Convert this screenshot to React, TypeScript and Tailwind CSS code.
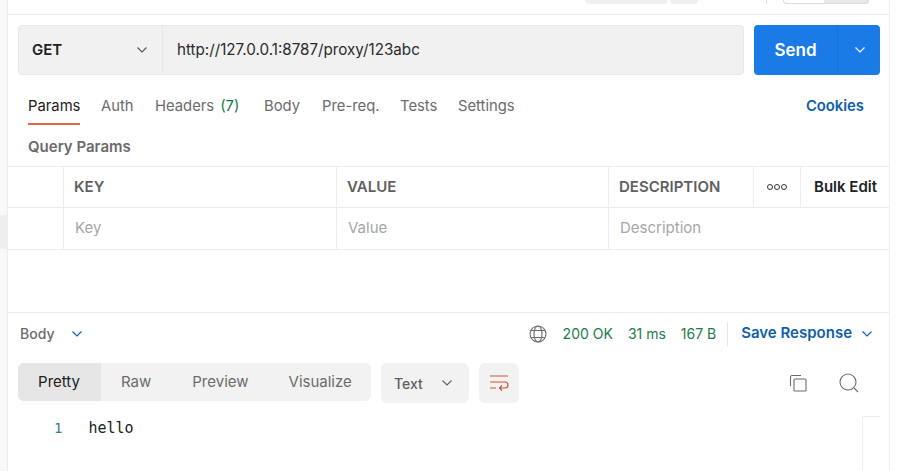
const tabs = [
  { label: "Params", width: "w-[73px]", active: true },
  { label: "Auth", width: "w-[54px]" },
  { label: "Headers", width: "w-[109px]", count: "(7)" },
  { label: "Body", width: "w-[58px]" },
  { label: "Pre-req.", width: "w-[78px]" },
  { label: "Tests", width: "w-[58px]" },
  { label: "Settings", width: "w-[70px]" },
];

function Chevron({ className }: { className: string }) {
  return (
    <svg viewBox="0 0 12 12" fill="none" stroke="currentColor" strokeWidth="1.1" className={className}>
      <path d="M1.5 3.5 6 8l4.5-4.5" />
    </svg>
  );
}

export default function App() {
  return (
    <div className="flex h-[471px] w-[900px] overflow-hidden bg-white font-['Inter',sans-serif]">
      <div className="flex w-[7px] flex-col bg-[#f9f9f9] pt-[215px]">
        <div className="h-[34px] bg-[#efefef]" />
      </div>

      <main className="flex w-[883px] flex-col border-x border-[#ededed]">
        <div className="flex h-[15px] items-start border-b border-[#ededed]">
          <div className="ml-[577px] h-[4px] w-[83px] rounded-b bg-[#f0f0f0]" />
          <div className="ml-[2px] h-[4px] w-[28px] rounded-b bg-[#f0f0f0]" />
          <div className="ml-[68px] h-[4px] w-px bg-[#e0e0e0]" />
          <div className="ml-[16px] flex h-[4px] w-[86px] overflow-hidden rounded-b border border-t-0 border-[#dcdcdc] bg-[#e8e8e8]">
            <div className="w-[40px] bg-white" />
          </div>
        </div>

        <div className="ml-[10px] mt-[10px] flex h-[50px] w-[862px]">
          <div className="flex w-[726px] rounded border border-[#e8e8e8] bg-[#f1f1f1]">
            <div className="flex w-[144px] items-center justify-between border-r border-[#e6e6e6] pl-[13px] pr-[14px] text-[15px] font-semibold text-[#212121]">
              GET
              <Chevron className="h-[12px] w-[12px] text-[#555]" />
            </div>
            <div className="flex items-center pl-[14px] pt-[1px] text-[15.2px] text-[#2b2b2b]">
              http://127.0.0.1:8787/proxy/123abc
            </div>
          </div>
          <div className="ml-[10px] flex w-[126px] rounded bg-[#1a7be6] text-white">
            <div className="flex w-[84px] items-center justify-center border-r border-[#1773d9] pt-[2px] text-[17px] font-semibold">
              Send
            </div>
            <div className="flex flex-1 items-center justify-center pl-[1px]">
              <Chevron className="h-[12px] w-[12px]" />
            </div>
          </div>
        </div>

        <div className="ml-[20px] mt-[20px] flex h-[30px] w-[836px] text-[14.8px] leading-[22px] text-[#6b6b6b]">
          {tabs.map((tab) => (
            <div key={tab.label} className={`${tab.width} shrink-0`}>
              <div className={tab.active ? "inline-block border-b-2 border-[#e0693e] pb-[6px] text-[#212121]" : ""}>
                {tab.label}
                {tab.count ? <span className="ml-[6px] text-[#0b7a44]">{tab.count}</span> : null}
              </div>
            </div>
          ))}
          <div className="ml-auto font-semibold text-[#0f5eab]">Cookies</div>
        </div>

        <div className="ml-[20px] mt-[12px] text-[15px] font-semibold leading-[20px] text-[#6b6b6b]">Query Params</div>

        <div className="mt-[9px] border-y border-[#ededed] text-[15px]">
          <div className="flex h-[41px] border-b border-[#ededed] font-semibold text-[#5f5f5f]">
            <div className="w-[56px] border-r border-[#ededed]" />
            <div className="flex w-[273px] items-center border-r border-[#ededed] pl-[10px]">KEY</div>
            <div className="flex w-[272px] items-center border-r border-[#ededed] pl-[10px]">VALUE</div>
            <div className="flex w-[145px] items-center border-r border-[#ededed] pl-[10px]">DESCRIPTION</div>
            <div className="flex w-[47px] items-center justify-center gap-px border-r border-[#ededed]">
              <span className="h-[6px] w-[6px] rounded-full border border-[#333]" />
              <span className="h-[6px] w-[6px] rounded-full border border-[#333]" />
              <span className="h-[6px] w-[6px] rounded-full border border-[#333]" />
            </div>
            <div className="flex flex-1 items-center pl-[13px] text-[#212121]">Bulk Edit</div>
          </div>
          <div className="flex h-[41px] text-[#a6a6a6]">
            <div className="w-[56px] border-r border-[#ededed]" />
            <div className="flex w-[273px] items-center border-r border-[#ededed] pl-[11px]">Key</div>
            <div className="flex w-[272px] items-center border-r border-[#ededed] pl-[11px]">Value</div>
            <div className="flex flex-1 items-center pl-[11px]">Description</div>
          </div>
        </div>

        <div className="mt-[62px] flex h-[42px] items-center border-t border-[#ededed] pl-[12px] text-[14px]">
          <span className="font-medium text-[#6b6b6b]">Body</span>
          <Chevron className="ml-[17px] h-[12px] w-[12px] text-[#0f5eab]" />
          <svg viewBox="0 0 18 18" fill="none" stroke="#6b6b6b" strokeWidth="1.1" className="ml-auto h-[18px] w-[18px]">
            <circle cx="9" cy="9" r="8" />
            <ellipse cx="9" cy="9" rx="4" ry="8" />
            <path d="M2 5.5h14M2 12.5h14" />
          </svg>
          <span className="ml-[16px] text-[#1c7c4c]">200 OK</span>
          <span className="ml-[15px] text-[#1c7c4c]">31 ms</span>
          <span className="ml-[15px] text-[#1c7c4c]">167 B</span>
          <span className="ml-[11px] h-[24px] w-px bg-[#e6e6e6]" />
          <span className="ml-[13px] text-[15px] font-semibold text-[#0f5eab]">Save Response</span>
          <Chevron className="ml-[9px] mr-[16px] h-[12px] w-[12px] text-[#0f5eab]" />
        </div>

        <div className="ml-[10px] mt-[9px] flex h-[40px] text-[15px]">
          <div className="flex h-[38px] w-[353px] overflow-hidden rounded-md bg-[#f2f2f2] text-[#6b6b6b]">
            <div className="flex w-[83px] items-center justify-center bg-[#e6e6e6] pr-[1px] text-[#212121]">Pretty</div>
            <div className="ml-[20px] flex items-center">Raw</div>
            <div className="ml-[41px] flex items-center">Preview</div>
            <div className="ml-[40px] flex items-center">Visualize</div>
          </div>
          <div className="ml-[10px] flex w-[88px] items-center justify-between rounded-md bg-[#f2f2f2] pl-[13px] pr-[16px] text-[14px] font-medium text-[#5f5f5f]">
            Text
            <Chevron className="h-[12px] w-[12px]" />
          </div>
          <div className="ml-[10px] flex w-[40px] items-center justify-center rounded-md bg-[#f2f2f2]">
            <svg viewBox="0 0 20 18" fill="none" stroke="#d0532d" strokeWidth="1.2" className="h-[18px] w-[20px]">
              <path d="M1 2h18M1 8h15a3 3 0 0 1 0 6h-5M13 11.5 10.5 14l2.5 2.5M1 14h6" />
            </svg>
          </div>
          <div className="ml-auto mr-[30px] flex items-center gap-[32px] text-[#6b6b6b]">
            <svg viewBox="0 0 18 18" fill="none" stroke="currentColor" strokeWidth="1.1" className="h-[18px] w-[18px]">
              <rect x="5" y="5" width="12" height="12" rx="1" />
              <path d="M12 1.5H3A1.5 1.5 0 0 0 1.5 3v9" />
            </svg>
            <svg viewBox="0 0 20 20" fill="none" stroke="currentColor" strokeWidth="1.1" className="h-[20px] w-[20px]">
              <circle cx="9" cy="9" r="8" />
              <path d="m15 15 4 4" />
            </svg>
          </div>
        </div>

        <div className="mt-[13px] flex h-[50px] items-start pl-[46px] leading-[20px]">
          <span className="mt-[2px] font-['DejaVu_Sans_Mono',monospace] text-[14px] text-[#3b7c90]">1</span>
          <span className="ml-[26px] mt-[2px] font-['DejaVu_Sans_Mono',monospace] text-[15px] text-[#212121]">hello</span>
          <div className="ml-auto mr-[9px] h-[55px] w-[18px] border-l border-t border-[#ededed]" />
        </div>
      </main>

      <div className="w-[10px] bg-white" />
    </div>
  );
}
